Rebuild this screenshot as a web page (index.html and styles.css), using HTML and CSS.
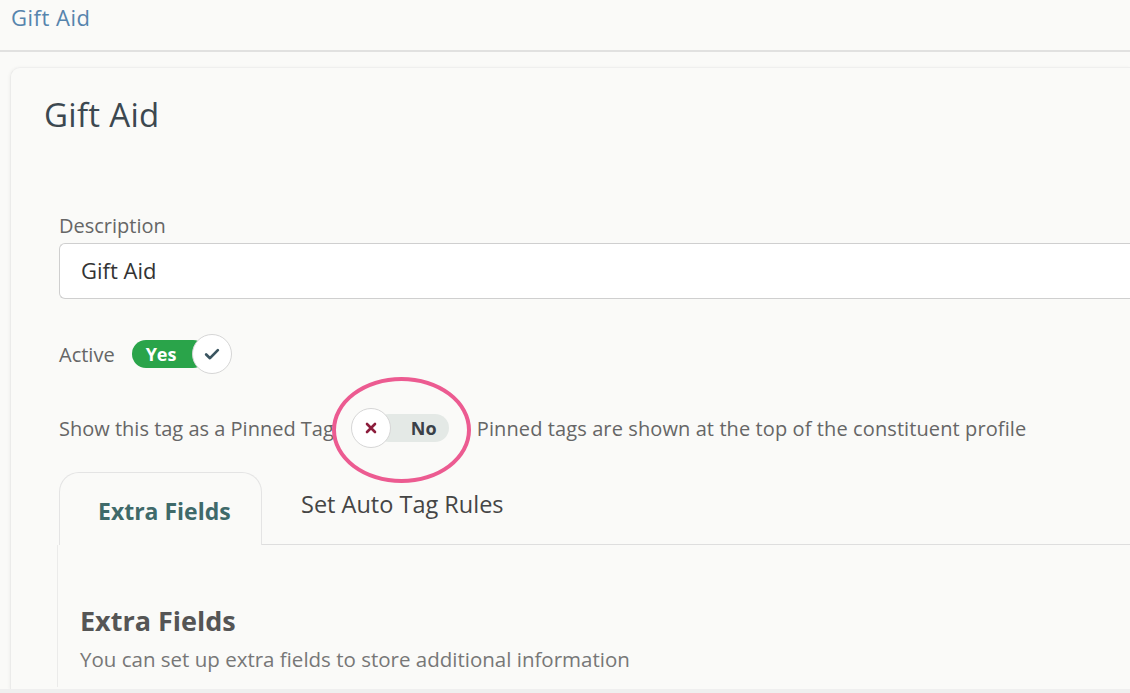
FILE: index.html
```html
<!DOCTYPE html>
<html lang="en">
<head>
<meta charset="utf-8">
<title>Gift Aid</title>
<link rel="stylesheet" href="styles.css">
</head>
<body>
<header class="topbar">
  <a class="crumb" href="#">Gift Aid</a>
</header>
<main class="card">
  <h1 class="title">Gift Aid</h1>
  <div class="form">
    <div class="field">
      <label class="label">Description</label>
      <div class="input">Gift Aid</div>
    </div>
    <div class="row active-row">
      <span class="label">Active</span>
      <span class="toggle on">
        <span class="pill">Yes</span>
        <span class="knob">
          <svg width="18" height="18" viewBox="0 0 16 16"><path d="M2.8 8.4l3.4 3.3L13.2 4.6" fill="none" stroke="#3b5560" stroke-width="2.4" stroke-linecap="round" stroke-linejoin="round"/></svg>
        </span>
      </span>
    </div>
    <div class="row pinned-row">
      <span class="label">Show this tag as a Pinned Tag</span>
      <span class="toggle off">
        <span class="knob">
          <svg width="14" height="14" viewBox="0 0 14 14"><path d="M3 3l8 8M11 3l-8 8" fill="none" stroke="#8c1d3c" stroke-width="2.6" stroke-linecap="round"/></svg>
        </span>
        <span class="pill">No</span>
        <span class="highlight"></span>
      </span>
      <span class="hint">Pinned tags are shown at the top of the constituent profile</span>
    </div>
    <nav class="tabs">
      <span class="tab active">Extra Fields</span>
      <span class="tab">Set Auto Tag Rules</span>
      <span class="tab-rest"></span>
    </nav>
    <section class="panel">
      <h2 class="panel-title">Extra Fields</h2>
      <p class="panel-text">You can set up extra fields to store additional information</p>
    </section>
  </div>
</main>
</body>
</html>
```
FILE: styles.css
```css
* { box-sizing: border-box; }
html, body { margin: 0; padding: 0; }
body {
  background: #fafaf8;
  font-family: "Open Sans", "Noto Sans", sans-serif;
  width: 1130px;
  height: 693px;
  overflow: hidden;
  border-bottom: 4px solid #efefef;
}
.topbar {
  height: 52px;
  border-bottom: 2px solid #e1e1e0;
  padding: 2px 0 0 11px;
}
.crumb {
  font-size: 22px;
  color: #5684ad;
  text-decoration: none;
  letter-spacing: 0.5px;
}
.card {
  margin: 15px 0 0 10px;
  border-left: 1px solid #ebebea;
  border-top: 1px solid #efefee;
  border-radius: 10px 0 0 0;
  box-shadow: -1px 0 3px rgba(0,0,0,0.04);
  padding: 23px 0 0 33px;
  height: 622px;
  overflow: hidden;
}
.title {
  margin: 0;
  font-size: 33px;
  font-weight: 400;
  color: #3c4850;
  line-height: 48px;
  letter-spacing: 0.3px;
}
.form {
  padding: 74px 0 0 15px;
}
.label {
  font-size: 20px;
  color: #666;
}
.field .label {
  display: block;
  line-height: 26px;
}
.input {
  margin-top: 4px;
  height: 56px;
  background: #fff;
  border: 1px solid #cfcfcf;
  border-right: none;
  border-radius: 6px 0 0 6px;
  padding-left: 21px;
  font-size: 22px;
  color: #333;
  line-height: 52px;
}
.row {
  display: flex;
  align-items: center;
}
.active-row { margin-top: 35px; height: 40px; }
.pinned-row { margin-top: 32px; height: 44px; }
.toggle {
  position: relative;
  display: inline-flex;
  align-items: center;
}
.toggle .knob {
  width: 40px;
  height: 40px;
  border-radius: 50%;
  background: #fff;
  border: 1px solid #d6d6d6;
  display: flex;
  align-items: center;
  justify-content: center;
  position: relative;
  z-index: 1;
}
.toggle .pill {
  height: 28px;
  border-radius: 14px;
  font-weight: 700;
  font-size: 18px;
  display: flex;
  align-items: center;
}
.toggle.on { margin-left: 17px; }
.toggle.on .pill {
  background: #2aa44a;
  color: #fff;
  width: 75px;
  padding-left: 14px;
  margin-right: -15px;
}
.toggle.off { margin-left: 17px; }
.toggle.off .pill {
  background: #e4e9e6;
  color: #3a4048;
  width: 74px;
  margin-left: -16px;
  padding-left: 36px;
}
.highlight {
  position: absolute;
  left: -19px;
  top: -31px;
  width: 139px;
  height: 106px;
  border: 4px solid #ec5b91;
  border-radius: 50%;
  pointer-events: none;
}
.hint {
  margin-left: 28px;
  font-size: 20px;
  color: #666;
  letter-spacing: 0.1px;
}
.tabs {
  display: flex;
  align-items: stretch;
  margin-top: 22px;
  height: 73px;
}
.tab {
  font-size: 23.5px;
  color: #454545;
  display: flex;
  align-items: center;
  padding: 0 39px 8px;
  border-bottom: 1px solid #dedede;
}
.tab.active {
  width: 203px;
  border: 1px solid #e4e4e4;
  border-bottom: none;
  border-radius: 20px 20px 0 0;
  font-weight: 700;
  font-size: 23px;
  color: #3f6a6a;
  padding: 4px 0 0 38px;
}
.tab-rest {
  flex: 1;
  border-bottom: 1px solid #dedede;
}
.panel {
  border-left: 1px solid #ebebea;
  margin-left: -2px;
  padding: 57px 0 0 22px;
  height: 142px;
}
.panel-title {
  margin: 0;
  font-size: 27px;
  font-weight: 700;
  color: #555;
  line-height: 38px;
}
.panel-text {
  margin: 6px 0 0;
  font-size: 20.5px;
  color: #777;
  line-height: 26px;
}
```
